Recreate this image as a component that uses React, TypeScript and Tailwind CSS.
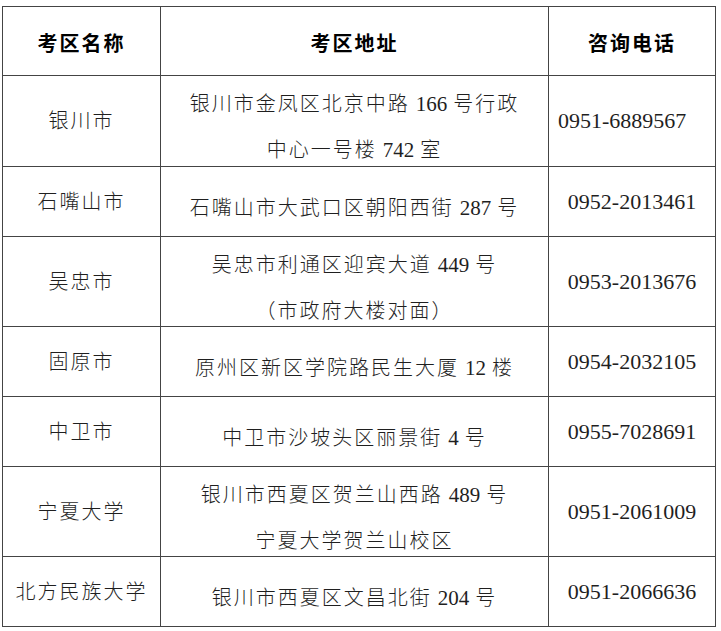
import React from 'react';

interface Row {
  name: string;
  address: React.ReactNode[];
  phone: string;
  height: string;
  phoneLeft?: boolean;
}

const Num: React.FC<{ children: React.ReactNode }> = ({ children }) => (
  <span className="text-[21px] tracking-normal mx-[6px]">{children}</span>
);

const rows: Row[] = [
  {
    name: '银川市',
    address: [
      <>银川市金凤区北京中路<Num>166</Num>号行政</>,
      <>中心一号楼<Num>742</Num>室</>,
    ],
    phone: '0951-6889567',
    height: 'h-[91px]',
    phoneLeft: true,
  },
  {
    name: '石嘴山市',
    address: [<>石嘴山市大武口区朝阳西街<Num>287</Num>号</>],
    phone: '0952-2013461',
    height: 'h-[70px]',
  },
  {
    name: '吴忠市',
    address: [<>吴忠市利通区迎宾大道<Num>449</Num>号</>, <>（市政府大楼对面）</>],
    phone: '0953-2013676',
    height: 'h-[90px]',
  },
  {
    name: '固原市',
    address: [<>原州区新区学院路民生大厦<Num>12</Num>楼</>],
    phone: '0954-2032105',
    height: 'h-[70px]',
  },
  {
    name: '中卫市',
    address: [<>中卫市沙坡头区丽景街<Num>4</Num>号</>],
    phone: '0955-7028691',
    height: 'h-[70px]',
  },
  {
    name: '宁夏大学',
    address: [<>银川市西夏区贺兰山西路<Num>489</Num>号</>, <>宁夏大学贺兰山校区</>],
    phone: '0951-2061009',
    height: 'h-[90px]',
  },
  {
    name: '北方民族大学',
    address: [<>银川市西夏区文昌北街<Num>204</Num>号</>],
    phone: '0951-2066636',
    height: 'h-[70px]',
  },
];

export default function App() {
  return (
    <div className="w-[721px] h-[631px] bg-white pt-[6px] pl-[2px]">
      <table className="table-fixed border-collapse w-[713px] font-['Liberation_Serif','Noto_Sans_CJK_SC',serif] text-[20px] leading-[30px] text-[#1f1f1f]">
        <colgroup>
          <col className="w-[158px]" />
          <col className="w-[388px]" />
          <col className="w-[167px]" />
        </colgroup>
        <thead>
          <tr className="h-[69px] font-['Noto_Sans_CJK_SC',sans-serif] font-bold text-black tracking-[2px]">
            <th className="border border-[#444] text-center align-middle pt-[3px]">考区名称</th>
            <th className="border border-[#444] text-center align-middle pt-[3px]">考区地址</th>
            <th className="border border-[#444] text-center align-middle pt-[3px]">咨询电话</th>
          </tr>
        </thead>
        <tbody>
          {rows.map((r) => (
            <tr key={r.name} className={r.height}>
              <td className="border border-[#444] text-center align-middle tracking-[2px] font-light">
                {r.name}
              </td>
              <td className="border border-[#444] text-center align-middle tracking-[2px] font-light pt-3">
                <div className="flex flex-col gap-[16px]">
                  {r.address.map((line, i) => (
                    <div key={i}>{line}</div>
                  ))}
                </div>
              </td>
              <td
                className={
                  r.phoneLeft
                    ? 'border border-[#444] text-left pl-[9px] align-middle text-[22px]'
                    : 'border border-[#444] text-center align-middle text-[22px]'
                }
              >
                {r.phone}
              </td>
            </tr>
          ))}
        </tbody>
      </table>
    </div>
  );
}
